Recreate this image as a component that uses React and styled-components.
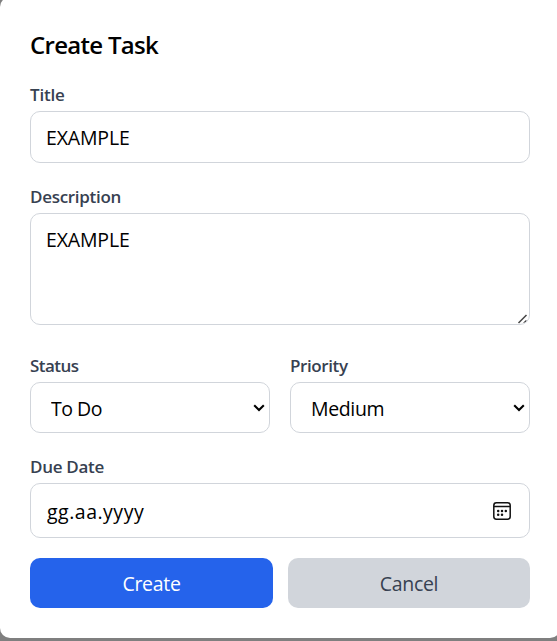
import React from 'react';
import styled, { createGlobalStyle } from 'styled-components';

const GlobalStyle = createGlobalStyle`
  *, *::before, *::after { box-sizing: border-box; }
  html, body { margin: 0; background: #7f7f7f; overflow: hidden; }
  body, input, textarea, select, button {
    font-family: "Segoe UI", "Open Sans", "Noto Sans", sans-serif;
  }
`;

const Backdrop = styled.main`
  height: 641px;
  overflow: hidden;
  background: #7f7f7f;
`;

const Dialog = styled.form`
  width: 560px;
  height: 641px;
  margin-top: -3px;
  padding: 30px;
  border-radius: 10px;
  background: #fff;
`;

const Heading = styled.h2`
  margin: 0 0 20px;
  height: 35px;
  font-size: 24px;
  line-height: 35px;
  font-weight: 600;
  letter-spacing: ${(p) => p.$track}px;
  color: #000;
`;

const Field = styled.div`
  display: flex;
  flex-direction: column;
  margin-bottom: ${(p) => p.$gap}px;
`;

const Label = styled.label`
  height: 25px;
  margin-bottom: 4px;
  font-size: 17px;
  line-height: 25px;
  font-weight: 600;
  letter-spacing: ${(p) => p.$track}px;
  color: #374151;
  white-space: nowrap;
`;

const Control = styled.div`
  display: grid;
  grid-template-columns: minmax(0, 1fr);
  height: ${(p) => p.$height}px;
  border: 1px solid #d1d5db;
  border-radius: 10px;
  background: #fff;
  overflow: hidden;

  & > * { grid-area: 1 / 1; }

  & > input, & > textarea, & > select {
    appearance: none;
    width: 100%;
    height: 100%;
    margin: 0;
    padding: ${(p) => p.$padding};
    border: 0;
    outline: 0;
    resize: none;
    background: transparent;
    color: #000;
    font-size: 19.5px;
    line-height: 30px;
    letter-spacing: ${(p) => p.$track}px;
  }
`;

const Chevron = styled.svg`
  justify-self: end;
  align-self: center;
  margin-right: 4px;
  pointer-events: none;
`;

const Grip = styled.svg`
  justify-self: end;
  align-self: end;
`;

const CalendarIcon = styled.svg`
  justify-self: end;
  align-self: center;
  margin-right: 18px;
`;

const Columns = styled.div`
  display: grid;
  grid-template-columns: 1fr 1fr;
  gap: 20px;
`;

const Actions = styled.div`
  display: grid;
  grid-template-columns: 243px 242px;
  gap: 15px;
`;

const Button = styled.button`
  height: 50px;
  padding: 2px 0 0;
  border: 0;
  border-radius: 10px;
  background: ${(p) => (p.$primary ? '#2563eb' : '#d1d5db')};
  color: ${(p) => (p.$primary ? '#fff' : '#374151')};
  font-size: 19.5px;
  line-height: 30px;
  letter-spacing: ${(p) => p.$track}px;
`;

function SelectField({ id, label, labelTrack, track, value, options }) {
  return (
    <Field $gap={21}>
      <Label htmlFor={id} $track={labelTrack}>{label}</Label>
      <Control $height={51} $padding="2px 30px 0 20px" $track={track}>
        <select id={id} defaultValue={value}>
          {options.map((o) => <option key={o}>{o}</option>)}
        </select>
        <Chevron width="12" height="8" viewBox="0 0 12 8">
          <path d="M1.2 1.3 L6 6 L10.8 1.3" fill="none" stroke="#000" strokeWidth="2.1" />
        </Chevron>
      </Control>
    </Field>
  );
}

export default function App() {
  return (
    <>
      <GlobalStyle />
      <Backdrop>
        <Dialog onSubmit={(e) => e.preventDefault()}>
          <Heading $track={-0.7}>Create Task</Heading>
          <Field $gap={21}>
            <Label htmlFor="title" $track={-0.2}>Title</Label>
            <Control $height={52} $padding="0 15px" $track={-0.15}>
              <input id="title" defaultValue="EXAMPLE" />
            </Control>
          </Field>
          <Field $gap={28}>
            <Label htmlFor="description" $track={-0.3}>Description</Label>
            <Control $height={112} $padding="11px 15px" $track={-0.15}>
              <textarea id="description" defaultValue="EXAMPLE" />
              <Grip width="12" height="11" viewBox="0 0 12 11">
                <path d="M1.5 10 L9.5 2 M6.8 10 L9.5 7.5" fill="none" stroke="#444" strokeWidth="1.5" />
              </Grip>
            </Control>
          </Field>
          <Columns>
            <SelectField id="status" label="Status" labelTrack={-0.55} track={-0.5} value="To Do" options={['To Do', 'In Progress', 'Done']} />
            <SelectField id="priority" label="Priority" labelTrack={-0.4} track={-0.35} value="Medium" options={['Low', 'Medium', 'High']} />
          </Columns>
          <Field $gap={20}>
            <Label htmlFor="due" $track={-0.3}>Due Date</Label>
            <Control $height={55} $padding="1px 50px 0 16px" $track={0.5}>
              <input id="due" defaultValue="gg.aa.yyyy" />
              <CalendarIcon width="18" height="18" viewBox="0 0 18 18">
                <rect x="0.8" y="0.8" width="16.4" height="16.4" rx="2.6" fill="none" stroke="#111" strokeWidth="1.5" />
                <path d="M1 4.6 H17" stroke="#111" strokeWidth="1.5" />
                <g fill="#111">
                  <circle cx="5.2" cy="9" r="1.25" />
                  <circle cx="9" cy="9" r="1.25" />
                  <circle cx="12.8" cy="9" r="1.25" />
                  <circle cx="5.2" cy="12.7" r="1.25" />
                  <circle cx="9" cy="12.7" r="1.25" />
                </g>
              </CalendarIcon>
            </Control>
          </Field>
          <Actions>
            <Button type="submit" $primary $track={-0.3}>Create</Button>
            <Button type="button" $track={-0.3}>Cancel</Button>
          </Actions>
        </Dialog>
      </Backdrop>
    </>
  );
}
